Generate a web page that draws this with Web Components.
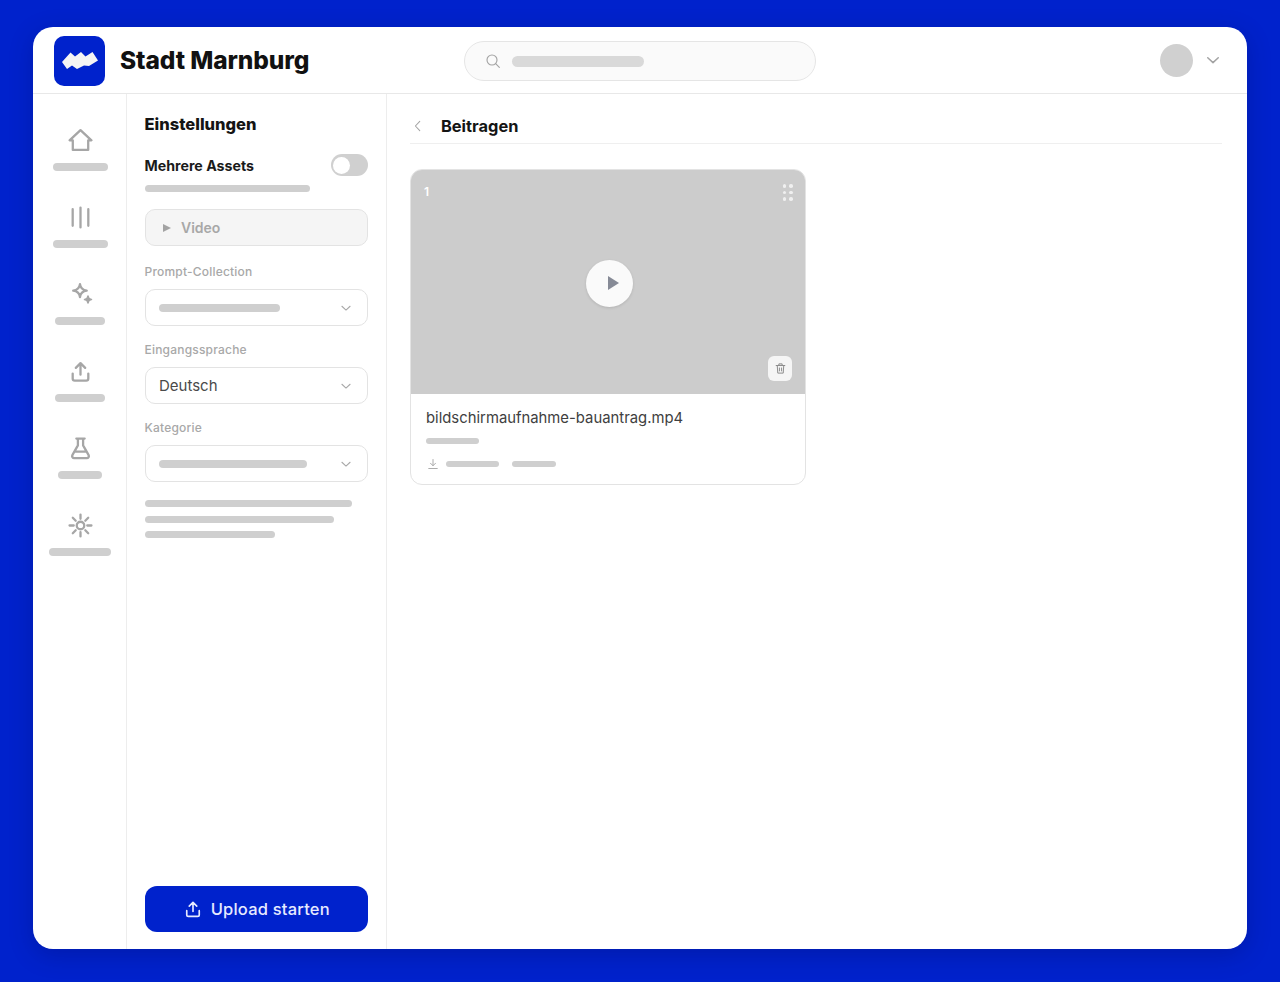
<!DOCTYPE html>
<html lang="de">
<head>
<meta charset="utf-8">
<title>Stadt Marnburg</title>
<style>
  html, body { margin: 0; height: 100%; }
  body {
    background: #0022cc;
    box-sizing: border-box;
    padding: 27px 33px 33px;
    height: 982px;
    overflow: hidden;
    font-family: Inter, "Liberation Sans", sans-serif;
    color: #141414;
  }
</style>
</head>
<body>
<app-shell>
  <app-header slot="header" brand="Stadt Marnburg"></app-header>
  <nav-rail slot="rail">
    <nav-item icon="home" bar="55"></nav-item>
    <nav-item icon="library" bar="55"></nav-item>
    <nav-item icon="sparkle" bar="50"></nav-item>
    <nav-item icon="upload" bar="50"></nav-item>
    <nav-item icon="flask" bar="44"></nav-item>
    <nav-item icon="sun" bar="62"></nav-item>
  </nav-rail>
  <settings-panel slot="panel"></settings-panel>
  <content-area slot="main" heading="Beitragen">
    <asset-card index="1" name="bildschirmaufnahme-bauantrag.mp4"></asset-card>
  </content-area>
</app-shell>

<script>
// Shared icon strokes, all on a 24 box
const ICONS = {
  home: '<path d="M1.5 11.8 12 2l10.5 9.8h-3.1V21H4.6v-9.2z"/>',
  library: '<path d="M4.5 4v16M12 2.5v19M19.500 4v16"/>',
  sparkle: '<path d="M11.5 2C12 6 13.7 7.7 18 8.2 13.7 8.700 12 10.400 11.500 14.400 11 10.400 9.300 8.700 5 8.200 9.300 7.700 11 6 11.500 2z"/><path fill="currentColor" stroke-width="1.6" d="M19.200 13.500C19.400 15.600 20.400 16.600 22.500 16.800 20.400 17 19.400 18 19.200 20.100 19 18 18 17 15.900 16.800 18 16.600 19 15.600 19.200 13.500z"/>',
  upload: '<path d="M12 15V4.500M7.500 8.500 12 4l4.500 4.500M4.500 14v4.800a2 2 0 0 0 2 2h11a2 2 0 0 0 2-2V14"/>',
  flask: '<path d="M8 2.500h8M9.500 2.500v6.500L4.200 18.300A2 2 0 0 0 6 21.300h12a2 2 0 0 0 1.800-3L14.500 9V2.500M7 15h10"/>',
  sun: '<circle cx="12" cy="12" r="3.600"/><path d="M12 1.500v4M12 18.500v4M1.500 12h4M18.500 12h4M4.600 4.600l2.800 2.800M16.600 16.600l2.800 2.800M4.600 19.400l2.800-2.800M16.600 7.400l2.800-2.800"/>',
  chevron: '<path d="M5 9l7 6.500L19 9"/>',
  back: '<path d="M15 4l-7.500 8 7.500 8"/>',
  search: '<circle cx="10.500" cy="10.500" r="7.500"/><path d="M16 16l5.500 5.500"/>',
  download: '<path d="M12 3v12M7 10.500l5 5 5-5M3.500 21h17"/>',
  trash: '<path d="M4 6.500h16M9 6V3.500h6V6M6 6.500l1 14h10l1-14M10 11v5.500M14 11v5.500"/>'
};

function icon(name, size, width) {
  return `<svg width="${size}" height="${size}" viewBox="0 0 24 24" fill="none" stroke="currentColor" stroke-width="${width}" stroke-linecap="round" stroke-linejoin="round" aria-hidden="true">${ICONS[name]}</svg>`;
}

class AppShell extends HTMLElement {
  constructor() {
    super();
    this.attachShadow({ mode: 'open' });
    this.shadowRoot.innerHTML = `
      <style>
        :host {
          display: grid;
          grid-template-columns: 94px 260px 1fr;
          grid-template-rows: 67px 1fr;
          width: 1214px;
          height: 922px;
          background: #fff;
          border-radius: 20px;
          overflow: hidden;
          box-shadow: 0 6px 24px rgba(0, 0, 60, .22);
        }
        .header { grid-column: 1 / -1; display: block; }
      </style>
      <slot name="header" class="header"></slot>
      <slot name="rail"></slot>
      <slot name="panel"></slot>
      <slot name="main"></slot>
    `;
  }
}

class AppHeader extends HTMLElement {
  constructor() {
    super();
    this.attachShadow({ mode: 'open' });
    this.shadowRoot.innerHTML = `
      <style>
        :host {
          display: flex;
          align-items: center;
          box-sizing: border-box;
          height: 67px;
          padding: 0 25px 0 21px;
          border-bottom: 1px solid #e8e8e8;
        }
        .logo {
          width: 51px; height: 50px;
          border-radius: 10px;
          background: #0022cc;
          display: flex; align-items: center; justify-content: center;
          margin-top: 2px;
        }
        .brand {
          margin-left: 15px;
          width: 344px;
          font-size: 24.5px;
          font-weight: 800;
          letter-spacing: -0.1px;
          color: #111;
        }
        .search {
          box-sizing: border-box;
          width: 352px; height: 40px;
          margin-top: 2px;
          border: 1px solid #e5e5e5;
          border-radius: 20px;
          background: #fafafa;
          display: flex; align-items: center;
          gap: 11px;
          padding-left: 20px;
          color: #a3a3a3;
        }
        .search i { width: 132px; height: 11px; border-radius: 6px; background: #d9d9d9; }
        .user { margin-left: auto; display: flex; align-items: center; gap: 11px; color: #a3a3a3; }
        .avatar { width: 33px; height: 33px; border-radius: 50%; background: #d0d0d0; }
        svg { display: block; }
      </style>
      <div class="logo">
        <svg width="36" height="18" viewBox="0 0 36 18" aria-hidden="true">
          <path fill="#f4f4f4" d="M0 10 8.500 .5 13 4.500 19 0l4.500 4.500L30.500 0 36 8.500 27 14l-5-.5L15 17l-5-3.500L5 17z"/>
        </svg>
      </div>
      <div class="brand">${this.getAttribute('brand')}</div>
      <div class="search">${icon('search', 16, 1.7)}<i></i></div>
      <div class="user"><div class="avatar"></div>${icon('chevron', 18, 2)}</div>
    `;
  }
}

class NavRail extends HTMLElement {
  constructor() {
    super();
    this.attachShadow({ mode: 'open' });
    this.shadowRoot.innerHTML = `
      <style>
        :host {
          display: flex;
          flex-direction: column;
          align-items: center;
          gap: 28px;
          box-sizing: border-box;
          height: 100%;
          padding: 34px 0 0 1.5px;
          border-right: 1px solid #ededed;
        }
      </style>
      <slot></slot>
    `;
  }
}

class NavItem extends HTMLElement {
  constructor() {
    super();
    this.attachShadow({ mode: 'open' });
    this.shadowRoot.innerHTML = `
      <style>
        :host {
          display: flex;
          flex-direction: column;
          align-items: center;
          gap: 10px;
          height: 49px;
          color: #a6a6a6;
        }
        svg { display: block; }
        i { display: block; height: 8px; border-radius: 4px; background: #cfcfcf; }
      </style>
      ${icon(this.getAttribute('icon'), 25, 2.2)}
      <i style="width:${this.getAttribute('bar')}px"></i>
    `;
  }
}

class SelectField extends HTMLElement {
  constructor() {
    super();
    this.attachShadow({ mode: 'open' });
    const value = this.getAttribute('value');
    const bar = this.getAttribute('bar');
    this.shadowRoot.innerHTML = `
      <style>
        :host { display: block; }
        label {
          display: block;
          height: 17px;
          line-height: 17px;
          font-size: 12px;
          letter-spacing: .2px;
          font-weight: 500;
          color: #a8a8a8;
          margin-bottom: 9px;
        }
        .box {
          box-sizing: border-box;
          height: 37px;
          border: 1px solid #e3e3e3;
          border-radius: 10px;
          display: flex; align-items: center; justify-content: space-between;
          padding: 0 14px 0 13.5px;
          font-size: 15px;
          color: #4a4a4a;
        }
        i { display: block; height: 8px; border-radius: 4px; background: #cfcfcf; }
        svg { display: block; color: #a8a8a8; }
      </style>
      <label>${this.getAttribute('label')}</label>
      <div class="box">
        ${value ? `<span>${value}</span>` : `<i style="width:${bar}px"></i>`}
        ${icon('chevron', 14, 1.8)}
      </div>
    `;
  }
}

class SettingsPanel extends HTMLElement {
  constructor() {
    super();
    this.attachShadow({ mode: 'open' });
    this.shadowRoot.innerHTML = `
      <style>
        :host {
          display: flex;
          flex-direction: column;
          box-sizing: border-box;
          height: 100%;
          padding: 19px 18px 17px 17.5px;
          border-right: 1px solid #ededed;
        }
        h2 { margin: 0; height: 22px; line-height: 22px; font-size: 16.5px; font-weight: 800; color: #141414; }
        .row {
          display: flex; align-items: center; justify-content: space-between;
          height: 22px;
          margin-top: 19px;
          font-size: 14.2px; font-weight: 700; color: #1a1a1a;
        }
        .toggle {
          box-sizing: border-box;
          width: 37.5px; height: 22px;
          border-radius: 11px;
          background: #d0d0d0;
          padding: 2.5px;
        }
        .toggle b { display: block; width: 17px; height: 17px; border-radius: 50%; background: #fff; }
        .help { display: block; width: 165.5px; height: 7px; border-radius: 4px; background: #cfcfcf; margin-top: 9px; }
        .media {
          box-sizing: border-box;
          height: 37px;
          margin: 17px 0 17px;
          border: 1px solid #e3e3e3;
          border-radius: 10px;
          background: #f5f5f5;
          display: flex; align-items: center; gap: 10px;
          padding-left: 17.5px;
          font-size: 14px; font-weight: 600; color: #a8a8a8;
        }
        .tri { width: 0; height: 0; border-left: 8px solid #a3a3a3; border-top: 4.5px solid transparent; border-bottom: 4.5px solid transparent; }
        select-field + select-field { margin-top: 15px; }
        .lines { margin-top: 18px; display: flex; flex-direction: column; gap: 8.5px; }
        .lines i { display: block; height: 7px; border-radius: 4px; background: #cfcfcf; }
        .cta {
          margin-top: auto;
          height: 46px;
          border: 0;
          border-radius: 12px;
          background: #0022cc;
          color: #e6eaff;
          font: 500 16.5px Inter, "Liberation Sans", sans-serif;
          letter-spacing: .2px;
          display: flex; align-items: center; justify-content: center; gap: 8px;
        }
        svg { display: block; }
      </style>
      <h2>Einstellungen</h2>
      <div class="row"><span>Mehrere Assets</span><div class="toggle"><b></b></div></div>
      <i class="help"></i>
      <div class="media"><span class="tri"></span>Video</div>
      <select-field label="Prompt-Collection" bar="121"></select-field>
      <select-field label="Eingangssprache" value="Deutsch"></select-field>
      <select-field label="Kategorie" bar="148"></select-field>
      <div class="lines">
        <i style="width:207.5px"></i>
        <i style="width:189.5px"></i>
        <i style="width:130.5px"></i>
      </div>
      <button class="cta">${icon('upload', 20, 2)}Upload starten</button>
    `;
  }
}

class ContentArea extends HTMLElement {
  constructor() {
    super();
    this.attachShadow({ mode: 'open' });
    this.shadowRoot.innerHTML = `
      <style>
        :host { display: block; padding: 16px 25px 0 23px; }
        header {
          display: flex; align-items: center; gap: 16px;
          height: 34px;
          box-sizing: border-box;
          padding: 0 0 2px 1px;
          border-bottom: 1px solid #efefef;
          margin-bottom: 25px;
          font-size: 16.4px; font-weight: 650; color: #141414;
        }
        svg { display: block; color: #a3a3a3; }
      </style>
      <header>${icon('back', 14, 1.8)}<span>${this.getAttribute('heading')}</span></header>
      <slot></slot>
    `;
  }
}

class AssetCard extends HTMLElement {
  constructor() {
    super();
    this.attachShadow({ mode: 'open' });
    this.shadowRoot.innerHTML = `
      <style>
        :host {
          display: block;
          box-sizing: border-box;
          width: 396px;
          height: 316px;
          border: 1px solid #e3e3e3;
          border-radius: 12px;
          overflow: hidden;
          background: #fff;
        }
        .media { position: relative; height: 224px; background: #cccccc; }
        .num { position: absolute; left: 13px; top: 14px; font-size: 12px; line-height: 15px; font-weight: 600; color: #fff; }
        .grip { position: absolute; right: 12.5px; top: 14px; display: grid; grid-template-columns: 3.5px 3.5px; gap: 3px; }
        .grip b { width: 3.5px; height: 3.5px; border-radius: 50%; background: #f0f0f0; }
        .play {
          position: absolute; left: 175px; top: 89.5px;
          width: 47px; height: 47px; border-radius: 50%;
          background: #fafafa;
          box-shadow: 0 1px 3px rgba(0, 0, 0, .12);
          display: flex; align-items: center; justify-content: center;
        }
        .play span { margin-left: 8px; width: 0; height: 0; border-left: 11px solid #868a96; border-top: 7px solid transparent; border-bottom: 7px solid transparent; }
        .del {
          position: absolute; right: 13px; bottom: 13px;
          width: 24px; height: 25px; border-radius: 6px;
          background: #f5f5f5; color: #8a8a8a;
          display: flex; align-items: center; justify-content: center;
        }
        .info { padding: 15px 15px 0; }
        .name { height: 18px; line-height: 18px; font-size: 14.85px; color: #404040; }
        i { display: block; height: 6px; border-radius: 3px; background: #cfcfcf; }
        .meta { margin-top: 11px; }
        .dl { display: flex; align-items: center; margin-top: 14px; color: #a3a3a3; }
        .dl svg { margin: 0 7px 0 1px; }
        .dl i + i { margin-left: 13px; }
        svg { display: block; }
      </style>
      <div class="media">
        <span class="num">${this.getAttribute('index')}</span>
        <div class="grip"><b></b><b></b><b></b><b></b><b></b><b></b></div>
        <div class="play"><span></span></div>
        <div class="del">${icon('trash', 13, 1.8)}</div>
      </div>
      <div class="info">
        <div class="name">${this.getAttribute('name')}</div>
        <i class="meta" style="width:53px"></i>
        <div class="dl">
          ${icon('download', 12, 1.8)}
          <i style="width:53px"></i>
          <i style="width:44px"></i>
        </div>
      </div>
    `;
  }
}

customElements.define('app-shell', AppShell);
customElements.define('app-header', AppHeader);
customElements.define('nav-rail', NavRail);
customElements.define('nav-item', NavItem);
customElements.define('select-field', SelectField);
customElements.define('settings-panel', SettingsPanel);
customElements.define('content-area', ContentArea);
customElements.define('asset-card', AssetCard);
</script>
</body>
</html>
